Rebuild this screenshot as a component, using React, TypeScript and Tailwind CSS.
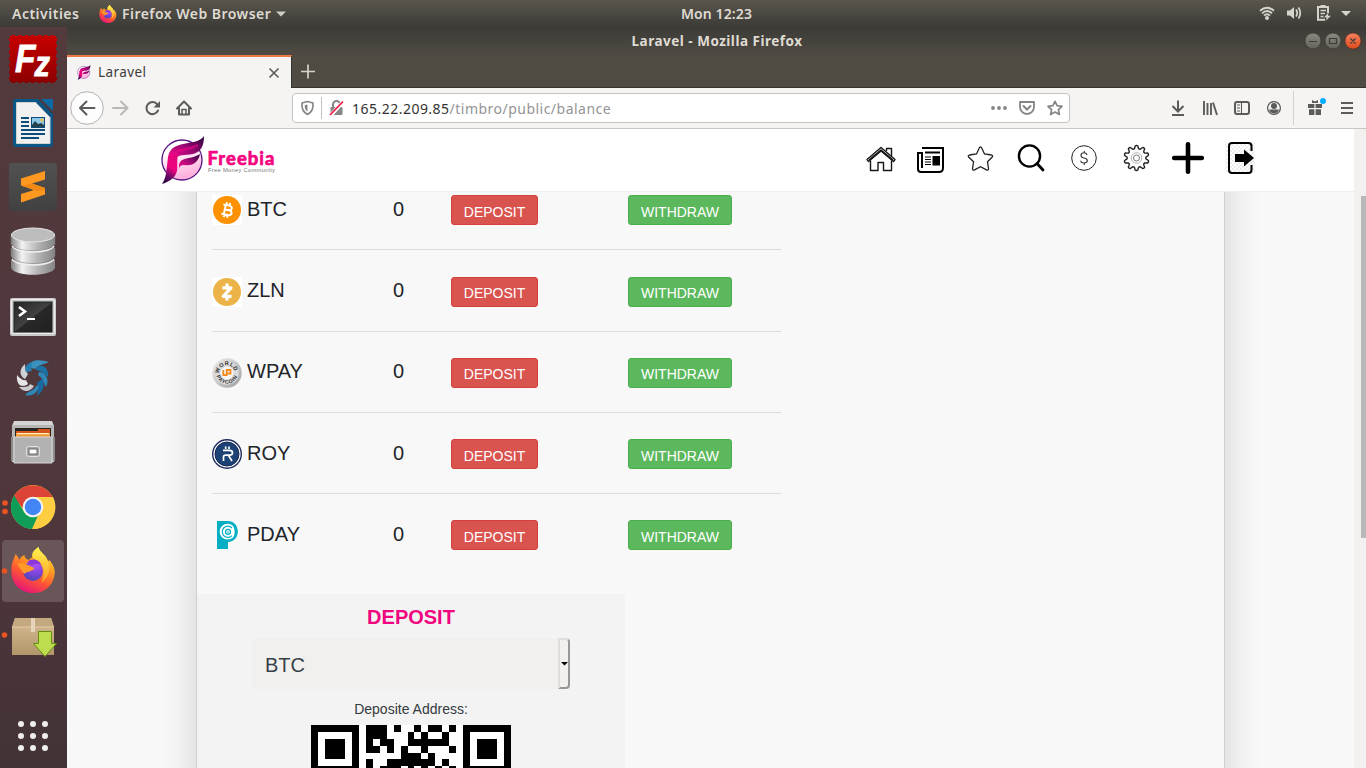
import React from "react";

type DrawProps = { x: number; y: number; w: number; h: number; className?: string; children: React.ReactNode };

/* Small drawing whose view box starts at (x, y) */
const Draw = ({ x, y, w, h, className = "", children }: DrawProps) => (
  <svg width={w} height={h} viewBox={`${x} ${y} ${w} ${h}`} fill="none" className={`block shrink-0 ${className}`}>
    {children}
  </svg>
);

const FirefoxShape = () => (
  <g>
    <defs>
      <linearGradient id="ffBody" x1="0.8" y1="0" x2="0.3" y2="1">
        <stop offset="0" stopColor="#fff44f" />
        <stop offset="0.35" stopColor="#ffa320" />
        <stop offset="0.65" stopColor="#ff5634" />
        <stop offset="1" stopColor="#e3127c" />
      </linearGradient>
      <radialGradient id="ffGlobe" cx="0.65" cy="0.2" r="0.8">
        <stop offset="0" stopColor="#b04dfb" />
        <stop offset="0.6" stopColor="#7a45d8" />
        <stop offset="1" stopColor="#4f48b8" />
      </radialGradient>
      <linearGradient id="ffFlame" x1="0" y1="0" x2="0" y2="1">
        <stop offset="0" stopColor="#fff44f" />
        <stop offset="1" stopColor="#ff9a25" />
      </linearGradient>
    </defs>
    <path d="M1 22 C1 14 4 12 5 7 C7 9 8 11 9 13 C10 10 12 9 14 8 C14 11 16 12 18 13 L22 10 C21 6 24 3 28 0 C29 5 33 6 36 11 L37 15 L39 13 C43 18 45 23 44 28 C42 40 33 46 23 46 C9 46 0 36 1 22Z" fill="url(#ffBody)" />
    <path d="M22 10 C21 5 24 3 28 0 C29 5 33 6 36 11 C42 20 38 31 31 36 C34 28 34 20 30 16 C28 13 24 13 22 10Z" fill="url(#ffFlame)" />
    <circle cx="22.500" cy="24" r="10" fill="url(#ffGlobe)" />
    <path d="M17 15 C21 11 28 12 31 18 C27 16 24 17 21 18Z" fill="#8a35d8" />
    <path d="M7 17 C12 14 17 18 24 21 C22 25 16 24 14 27 C11 24 9 21 7 17Z" fill="#ff9a2a" />
  </g>
);

const FreebiaMark = () => (
  <g>
    <defs>
      <linearGradient id="fbDisc" x1="0" y1="0" x2="0.3" y2="1">
        <stop offset="0.3" stopColor="#ffffff" />
        <stop offset="1" stopColor="#ffb0dc" />
      </linearGradient>
      <linearGradient id="fbStem" x1="0.7" y1="0" x2="0.3" y2="1">
        <stop offset="0" stopColor="#e0047c" />
        <stop offset="0.45" stopColor="#f0047f" />
        <stop offset="0.75" stopColor="#6b0c68" />
        <stop offset="1" stopColor="#2a0440" />
      </linearGradient>
      <linearGradient id="fbTop" x1="0" y1="1" x2="1" y2="0">
        <stop offset="0" stopColor="#ff0a8c" />
        <stop offset="0.5" stopColor="#a00874" />
        <stop offset="1" stopColor="#24043c" />
      </linearGradient>
    </defs>
    <circle cx="21" cy="24" r="20" fill="url(#fbDisc)" stroke="#541280" strokeWidth="1.3" />
    <path d="M7 21 C9 10 17 9 27 7 C35 6 40 4 43 0 C43 10 40 16 32 18 C24 20 17 17 13 25 C9 22 8 22 7 21Z" fill="url(#fbTop)" />
    <path d="M7 21 C11 18 14 17 18 18 C15 22 17 28 16 35 C14 43 7 46 1 48 C5 42 5 37 6 30Z" fill="url(#fbStem)" />
    <path d="M18 29 C20 20 30 24 39 18 C37 28 30 30 23 29 C20 29 19 30 18 32Z" fill="url(#fbTop)" />
    <path d="M10 20 C16 12 27 15 37 9" stroke="#f5058a" strokeWidth="3" strokeOpacity="0.55" />
  </g>
);

const perforations = Array.from({ length: 7 }, (_, i) => 13.500 + i * 6.500);

const dockIcons: React.ReactNode[] = [
  <g key="filezilla">
    <defs>
      <linearGradient id="fz" x1="0" y1="8" x2="0" y2="56" gradientUnits="userSpaceOnUse">
        <stop offset="0" stopColor="#c80000" />
        <stop offset="1" stopColor="#8c0000" />
      </linearGradient>
    </defs>
    <rect x="10" y="9" width="46" height="46" fill="url(#fz)" />
    {perforations.map((p) => (
      <g key={p} fill="url(#fz)">
        <circle cx={p} cy="10" r="2.200" />
        <circle cx={p} cy="54" r="2.200" />
        <circle cx="11" cy={p - 1} r="2.200" />
        <circle cx="55" cy={p - 1} r="2.200" />
      </g>
    ))}
    <text x="15" y="45" fontFamily="Liberation Sans" fontWeight="700" fontStyle="italic" fontSize="38" fill="#fff" stroke="#fff" strokeWidth="0.8" textLength="35" lengthAdjust="spacingAndGlyphs">
      F<tspan dy="4" dx="-1" fontSize="35">z</tspan>
    </text>
  </g>,
  <g key="writer">
    <path d="M16 8H38L53 23V53Q53 56 50 56H16Q13 56 13 53V10Q13 8 16 8Z" fill="#0b5587" />
    <path d="M16.5 11.5H36L50 26V52.5H16.5Z" fill="#f1f1f1" stroke="#d3d3d3" />
    <path d="M36 11.5L50 26V21L40 11Z" fill="#10547f" />
    <path d="M38 7H42L53 18V23Z" fill="#4e363b" />
    <path d="M41 8H53V20Z" fill="#0b69a3" />
    <path d="M21 27H29M21 31H29M21 35H29M21 39H45M21 43H45M21 47H39" stroke="#0b4c78" strokeWidth="1.9" />
    <rect x="31.5" y="26.5" width="13" height="10" fill="#8fc8e6" stroke="#0b4c78" />
    <path d="M32 36V34L35 30L38 33L41 32L44 34V36Z" fill="#23404f" />
    <circle cx="42" cy="29" r="1.8" fill="#e8c05a" />
  </g>,
  <g key="sublime">
    <defs>
      <linearGradient id="sub" x1="0" y1="0" x2="0" y2="1">
        <stop offset="0" stopColor="#515151" />
        <stop offset="1" stopColor="#414141" />
      </linearGradient>
    </defs>
    <rect x="9" y="8" width="48" height="48" rx="3" fill="url(#sub)" />
    <path d="M21 23.5L45 16V24.5L32 28.5L45 33V39.5L21 47.5V39L34 35L21 30.5Z" fill="#ff9820" />
    <path d="M21 30.5L32 28.5L45 33V35L37 36Z" fill="#f08a14" />
  </g>,
  <g key="database">
    <defs>
      <linearGradient id="db" x1="0" x2="1">
        <stop offset="0" stopColor="#7f7f7f" />
        <stop offset="0.25" stopColor="#f3f3f3" />
        <stop offset="0.6" stopColor="#b5b5b5" />
        <stop offset="1" stopColor="#858585" />
      </linearGradient>
    </defs>
    <path d="M11 41V49C14 58 52 58 55 49V41Z" fill="url(#db)" />
    <path d="M11 29V37C14 47 52 47 55 37V29Z" fill="url(#db)" stroke="#777" strokeWidth="0.5" />
    <path d="M11 16V25C14 34 52 34 55 25V16Z" fill="url(#db)" stroke="#777" strokeWidth="0.5" />
    <path d="M12 27C16 35 50 35 54 27M12 40C16 48 50 48 54 40" stroke="#f0f0f0" strokeWidth="1.4" />
    <ellipse cx="33" cy="16" rx="21.5" ry="7" fill="#bdbdbd" stroke="#e5e5e5" />
  </g>,
  <g key="terminal">
    <defs>
      <linearGradient id="term" x1="0" y1="0" x2="1" y2="1">
        <stop offset="0" stopColor="#242424" />
        <stop offset="0.5" stopColor="#424242" />
        <stop offset="0.51" stopColor="#282828" />
        <stop offset="1" stopColor="#202020" />
      </linearGradient>
    </defs>
    <rect x="10" y="15" width="46" height="38" rx="2" fill="#c9c9c9" />
    <rect x="11.5" y="16.5" width="43" height="34" rx="1" stroke="#ededed" />
    <rect x="14" y="19" width="38" height="30" fill="url(#term)" stroke="#202020" />
    <path d="M19 24L25 28.5L19 33" stroke="#fff" strokeWidth="2.6" />
    <path d="M27 36H35" stroke="#fff" strokeWidth="2" />
  </g>,
  <g key="shutter">
    <path d="M27 20C31 12 40 12 49 15C45 17 38 18 35 22Z" fill="#3b91bd" />
    <path d="M36 21C42 16 49 20 48 30C45 27 42 24 36 23Z" fill="#1a72a5" />
    <path d="M39 25C46 25 50 33 46 40C43 35 43 31 38 28Z" fill="#2e87b5" />
    <path d="M42 32C46 37 43 45 37 49C38 42 39 39 37 36Z" fill="#1769a0" />
    <path d="M39 38C38 46 32 50 25 48C30 43 35 43 36 39Z" fill="#2e87b5" />
    <path d="M34 39C30 45 24 46 19 40C25 40 29 40 30 37Z" fill="#c9c9ce" />
    <path d="M28 37C21 42 16 37 17 28C20 32 24 34 26 33Z" fill="#e5e5e8" />
    <path d="M25 32C19 29 19 22 25 17C25 23 27 26 28 27Z" fill="#cfd0d6" />
    <path d="M26 25C24 21 26 17 32 15C31 21 31 22 32 24Z" fill="#267faf" />
  </g>,
  <g key="files">
    <path d="M14 10H52L54 15V51H12V15Z" fill="#d4d4d4" />
    <path d="M12 14H54L53 50H13Z" fill="#b5b5b5" />
    <rect x="15" y="17" width="36" height="10" fill="#282420" />
    <path d="M16 20H38V18H50V27H16Z" fill="#d3551c" />
    <path d="M16 22H50V27H16Z" fill="#f29a37" />
    <path d="M17 22.6H49" stroke="#fff0c4" strokeWidth="1.2" />
    <path d="M14 26H52V52H14Z" fill="#b2b2b2" stroke="#d6d6d6" />
    <path d="M12 26V50M54 26V50" stroke="#8a8a8a" strokeWidth="2" />
    <rect x="26.5" y="35.5" width="13" height="10" rx="2" fill="#a4a4a4" stroke="#e0e0e0" />
    <rect x="29" y="38" width="8" height="5" fill="#fff" stroke="#686868" />
  </g>,
  <g key="chrome" transform="translate(0 1)">
    <circle cx="5" cy="27" r="2.8" fill="#e95420" />
    <circle cx="5" cy="35.5" r="2.8" fill="#e95420" />
    <circle cx="33" cy="31" r="22" fill="#ffcd42" />
    <path d="M13.5 21A22 22 0 0 1 52.5 21H33A10 10 0 0 0 23.5 33Z" fill="#db4437" />
    <path d="M14.2 19.5L24.5 36.5A10 10 0 0 0 38 39.5L32 53A22 22 0 0 1 14.2 19.5Z" fill="#0f9d58" />
    <path d="M33 21H53A22 22 0 0 1 32.5 53L42 36A10 10 0 0 0 33 21Z" fill="#ffcd42" />
    <circle cx="33" cy="31" r="10.3" fill="#f4f4f4" />
    <circle cx="33" cy="31" r="8.2" fill="#4285f4" />
  </g>,
  <g key="firefox">
    <rect x="2" y="1" width="62" height="62" rx="4" fill="#685659" />
    <circle cx="4.5" cy="32" r="2.8" fill="#e95420" />
    <g transform="translate(10.5 8)">
      <FirefoxShape />
    </g>
  </g>,
  <g key="package">
    <defs>
      <linearGradient id="box" x1="0" y1="0" x2="0" y2="1">
        <stop offset="0" stopColor="#d8bd93" />
        <stop offset="1" stopColor="#b1966a" />
      </linearGradient>
    </defs>
    <circle cx="4.5" cy="32" r="2.8" fill="#e95420" />
    <path d="M15 15H51L54 24V52H12V24Z" fill="url(#box)" />
    <path d="M15 15H51L54 24H12Z" fill="#c3a880" />
    <path d="M12 24H54" stroke="#e3cda8" />
    <path d="M31 15H35V29H31Z" fill="#e6d5bb" />
    <path d="M38.5 28.5H51.5V40.5H56.5L45 53.5L33.5 40.5H38.5Z" fill="#bedd4e" stroke="#62920f" />
  </g>,
];

const coins = [
  { name: "BTC", row: "h-[58px] pt-[3px] border-b", text: "leading-[28px]", button: "leading-[27px]", icon: (
    <>
      <rect width="30" height="30" fill="#fff" />
      <circle cx="15" cy="15" r="14" fill="#fd9100" />
      <g transform="rotate(12 15 15)">
        <path d="M10.3 10.3H16C20.5 10.3 20.3 14.6 16.3 14.8C21.6 14.8 21.2 19.8 16.6 19.8H10.3M12.7 10V20M13 14.9H16.4M13.4 7.4V10M16.6 7.4V10M13.4 20V22.6M16.6 20V22.6" stroke="#fff" strokeWidth="2" />
      </g>
    </>
  ) },
  { name: "ZLN", row: "h-[82px] pt-[27px] border-b", text: "leading-[26px]", button: "leading-[25px]", icon: (
    <>
      <rect width="30" height="30" fill="#fff" />
      <circle cx="15" cy="15" r="14" fill="#ebb348" />
      <path d="M10.4 10.8H19L11.2 19.3H19.5M15 6.6V10M15 20V23.6" stroke="#fff" strokeWidth="3.2" strokeLinejoin="round" />
    </>
  ) },
  { name: "WPAY", row: "h-[81px] pt-[26px] border-b", text: "leading-[26px]", button: "leading-[25px]", icon: (
    <>
      <defs>
        <linearGradient id="wp" x1="0" y1="0" x2="1" y2="1">
          <stop offset="0" stopColor="#f0f0f0" />
          <stop offset="0.5" stopColor="#c8c8c8" />
          <stop offset="1" stopColor="#9c9c9c" />
        </linearGradient>
        <path id="wpTop" d="M7 15.5A8 8.3 0 0 1 23 15.5" />
        <path id="wpBottom" d="M4.2 15A10.8 10.8 0 0 0 25.8 15" />
      </defs>
      <circle cx="15" cy="15" r="14.7" fill="url(#wp)" />
      <circle cx="15" cy="15" r="11.8" fill="#d9d9d9" />
      <circle cx="15" cy="15" r="6.4" fill="#f6f6f6" />
      <text fontFamily="Liberation Sans" fontWeight="700" fontSize="5.600" fill="#333"><textPath href="#wpTop" textLength="23">WORLD</textPath></text>
      <text fontFamily="Liberation Sans" fontWeight="700" fontSize="5.200" fill="#333"><textPath href="#wpBottom" startOffset="3" textLength="27">PAYCOIN</textPath></text>
      <path d="M11.3 12V17H14.7V12M14.7 18V12H18.5V15.5H15" stroke="#f58a1f" strokeWidth="1.8" />
    </>
  ) },
  { name: "ROY", row: "h-[81px] pt-[26px] border-b", text: "leading-[28px]", button: "leading-[27px]", icon: (
    <>
      <circle cx="15" cy="15" r="14.3" fill="#fff" stroke="#1e2a5e" strokeWidth="1.4" />
      <circle cx="15" cy="15" r="12" fill="#1d4275" stroke="#162554" />
      <path d="M11 11.3H17.5C21.5 11.3 21.5 16.2 17.5 16.2H13.6C12 16.2 11.5 17 11.5 18V22M16.5 16.5L20 22M13.7 7.5V10M17 7.5V10" stroke="#fff" strokeWidth="1.7" />
    </>
  ) },
  { name: "PDAY", row: "h-[100px] pt-[26px]", text: "leading-[28px]", button: "leading-[27px]", icon: (
    <>
      <path d="M5 1H16C29 1 29 22 16 22V29H5Z" fill="#05aec3" />
      <circle cx="15.6" cy="11.7" r="7.9" fill="#fff" />
      <path d="M20 8A5.6 5.6 0 1 0 20 15.6" stroke="#05aec3" strokeWidth="1.2" />
      <circle cx="16" cy="11.8" r="2.5" stroke="#05aec3" strokeWidth="1.3" />
      <path d="M20 4C23.500 8 23.500 16 20 20C27 17 27.500 7 20 4Z" fill="#05aec3" />
      <path d="M16 11V13.5" stroke="#05aec3" />
    </>
  ) },
];

const qrRows = [
  "11111110111010010110101111111",
  "10000010111000101001001000001",
  "10111010101100111111001011101",
  "10111010110101001000101011101",
  "10111010000001110100001011101",
  "10000010100111111101001000001",
  "11111110101110101010101111111",
];

const gearPath = (() => {
  const pts: string[] = [];
  for (let i = 0; i < 90; i++) {
    const a = (i / 90) * Math.PI * 2;
    const r = 10.9 + 1.6 * Math.tanh(2.2 * Math.cos(10 * (a + Math.PI / 2)));
    pts.push(`${(1136.5 + r * Math.cos(a)).toFixed(2)} ${(158 + r * Math.sin(a)).toFixed(2)}`);
  }
  return `M${pts.join("L")}Z`;
})();

const TopBar = () => (
  <div className="flex h-[27px] shrink-0 items-center bg-linear-to-b from-[#5a564d] to-[#3c3b37] font-['Noto_Sans'] text-[14px] font-semibold leading-[25px] text-[#dfdbd2]">
    <div className="flex w-[681px] items-center pl-3">
      <span className="-mt-px w-[87px] shrink-0 tracking-[0.5px]">Activities</span>
      <svg width="18" height="18" viewBox="0 0 46 46" className="mr-[5px] shrink-0"><FirefoxShape /></svg>
      <span className="-mt-px tracking-[0.47px] whitespace-nowrap">Firefox Web Browser</span>
      <Draw x={275} y={10} w={12} h={8} className="ml-[4px]"><path d="M276 11.5H286L281 16.5Z" fill="#cfccc4" /></Draw>
    </div>
    <span className="-mt-px tracking-[0.1px] whitespace-nowrap">Mon 12:23</span>
    <div className="flex flex-1 items-center justify-end">
      <Draw x={1256} y={0} w={110} h={27}>
        <g stroke="#d6d3cb" strokeWidth="1.8">
          <path d="M1260 10.8Q1267 4.8 1274 10.8" />
          <path d="M1262 13.3Q1267 8.8 1272 13.3" />
          <path d="M1264 15.6Q1267 12.8 1270 15.6" />
          <path d="M1296 9.5Q1298.5 13 1296 16.5M1298.5 7.5Q1302 13 1298.5 18.5" strokeWidth="1.8" />
          <path d="M1325 19.8H1318V7H1328V13" strokeWidth="2" />
          <path d="M1320.5 10.500H1326M1320.5 13.500H1325M1320.5 16.500H1323.5" strokeWidth="1.3" />
        </g>
        <circle cx="1267" cy="18" r="2" fill="#d6d3cb" />
        <path d="M1287 10.5H1290L1294 7V19L1290 15.5H1287Z" fill="#d6d3cb" />
        <path d="M1320.5 5H1325.5V7.5H1320.5ZM1328.5 12.5L1324 17.5H1327L1325.5 21L1331 15.8H1328Z" fill="#d6d3cb" />
        <path d="M1341 11H1351L1346 16Z" fill="#d6d3cb" />
      </Draw>
    </div>
  </div>
);

const Dock = () => (
  <div className="flex w-[67px] shrink-0 flex-col bg-linear-to-b from-[#533a3d] via-[#4e363b] via-70% to-[#423236]">
    {dockIcons.map((icon, i) => (
      <svg key={i} width="67" height="64" viewBox="0 0 67 64" fill="none" className="block shrink-0">{icon}</svg>
    ))}
    <svg width="67" height="64" viewBox="0 0 67 64" className="mt-auto block shrink-0">
      {[20, 32, 44].map((cy) => [21, 33, 45].map((cx) => <circle key={`${cx}-${cy}`} cx={cx} cy={cy} r="3" fill="#f0efee" />))}
    </svg>
  </div>
);

const Chrome = () => (
  <>
    <div className="flex h-[28px] shrink-0 items-center bg-linear-to-b from-[#3c3b37] to-[#4f4b43]">
      <div className="flex-1" />
      <span className="pl-[1px] font-['Noto_Sans'] text-[13.5px] font-bold leading-7 tracking-[0.5px] whitespace-nowrap text-[#dfdbd2]">Laravel - Mozilla Firefox</span>
      <div className="flex flex-1 justify-end">
        <Draw x={1302} y={27} w={64} h={28}>
          <defs>
            <linearGradient id="wb" x1="0" y1="0" x2="0" y2="1"><stop offset="0" stopColor="#8b887f" /><stop offset="1" stopColor="#65625a" /></linearGradient>
            <linearGradient id="wc" x1="0" y1="0" x2="0" y2="1"><stop offset="0" stopColor="#f4825f" /><stop offset="1" stopColor="#df4b1c" /></linearGradient>
          </defs>
          <circle cx="1313" cy="41" r="8" fill="url(#wb)" stroke="#383631" strokeWidth="0.7" />
          <circle cx="1333" cy="41" r="8" fill="url(#wb)" stroke="#383631" strokeWidth="0.7" />
          <circle cx="1353" cy="41" r="8" fill="url(#wc)" stroke="#5a2d1e" strokeWidth="0.7" />
          <path d="M1309 41.5H1317M1329.5 38.5H1336.5V43.5H1329.5ZM1350.5 38.5L1355.5 43.5M1355.5 38.5L1350.5 43.5" stroke="#3c3b37" strokeWidth="1.2" />
        </Draw>
      </div>
    </div>
    <div className="flex h-[33px] shrink-0 border-b border-[#33322e] bg-[#4f4b43]">
      <div className="-mb-px flex w-[225px] items-center border-t-2 border-r border-t-[#f07746] border-r-[#33322e] bg-[#f5f4f2] pl-[10px]">
        <svg width="14" height="15" viewBox="0 0 44 49" fill="none" className="mr-[7px] shrink-0"><FreebiaMark /></svg>
        <span className="-mt-[2px] flex-1 font-['Noto_Sans'] text-[13.5px] leading-5 tracking-[0.4px] text-[#3d3d3d]">Laravel</span>
        <Draw x={267} y={65} w={14} h={14} className="mr-[10px]"><path d="M269.5 67.5L278.5 76.5M278.5 67.5L269.5 76.5" stroke="#5b5b5a" strokeWidth="1.6" /></Draw>
      </div>
      <Draw x={292} y={55} w={32} h={32}><path d="M301 71.5H315M308 64.5V78.5" stroke="#d5d2ca" strokeWidth="1.7" /></Draw>
    </div>
    <div className="flex h-[41px] shrink-0 items-center border-b border-[#c8c5c2] bg-[#f5f4f2]">
      <Draw x={67} y={88} w={225} h={40}>
        <circle cx="87" cy="108" r="16.3" fill="#fdfdfd" stroke="#b4b2b0" />
        <path d="M94.5 108H80.5M86.5 101.5L80 108L86.5 114.5" stroke="#5b5b5a" strokeWidth="2" strokeLinecap="round" strokeLinejoin="round" />
        <path d="M113 108H127M121 101.5L127.5 108L121 114.5" stroke="#b9b8b7" strokeWidth="2" strokeLinecap="round" strokeLinejoin="round" />
        <path d="M157.3 104.5A6 6 0 1 0 158 110.5" stroke="#5b5b5a" strokeWidth="2" strokeLinecap="round" />
        <path d="M160 101V107.5H153.5Z" fill="#5b5b5a" />
        <path d="M177 108.5L184 101.5L191 108.5M179 107.5V114.5H189V107.5" stroke="#5b5b5a" strokeWidth="2" strokeLinecap="round" strokeLinejoin="round" />
        <path d="M182 114V109.5H186V114" stroke="#5b5b5a" strokeWidth="1.5" />
      </Draw>
      <div className="flex h-[30px] w-[778px] shrink-0 items-center rounded-[4px] border border-[#c5c3c1] bg-white">
        <Draw x={293} y={94} w={59} h={28}>
          <path d="M302 103L307.5 101.5L313 103C313.5 109.5 311.5 112 307.5 114.5C303.5 112 301.5 109.5 302 103Z" stroke="#858585" strokeWidth="1.7" strokeLinejoin="round" />
          <path d="M307.5 104.5V111.5C305 110 304.7 108 304.7 105.2Z" fill="#858585" />
          <path d="M321.5 97V119" stroke="#c5c3c1" />
          <path d="M333 107V104.5A3.5 3.5 0 0 1 340 104.5V107" stroke="#858585" strokeWidth="2" />
          <rect x="330.5" y="107" width="12" height="8" rx="1" fill="#858585" />
          <path d="M330.5 115.5L343.5 101.5" stroke="#fff" strokeWidth="4" />
          <path d="M330 115L343 101.5" stroke="#f5194a" strokeWidth="1.8" />
        </Draw>
        <span className="mt-[2px] flex-1 font-['Noto_Sans'] text-[14px] leading-5 tracking-[0.48px] whitespace-nowrap text-[#333]">165.22.209.85<span className="text-[#949494]">/timbro/public/balance</span></span>
        <Draw x={985} y={94} w={84} h={28}>
          <g fill="#858585"><circle cx="993" cy="108" r="1.9" /><circle cx="999" cy="108" r="1.9" /><circle cx="1005" cy="108" r="1.9" /></g>
          <path d="M1020 102H1034V107A7 7 0 0 1 1020 107Z" stroke="#858585" strokeWidth="1.8" strokeLinejoin="round" />
          <path d="M1023.5 106L1027 109.5L1030.5 106" stroke="#858585" strokeWidth="2" strokeLinecap="round" />
          <path d="M1055 101.3L1057.1 105.7L1062 106.3L1058.4 109.6L1059.4 114.5L1055 112.1L1050.6 114.5L1051.6 109.6L1048 106.3L1052.9 105.7Z" stroke="#858585" strokeWidth="1.7" strokeLinejoin="round" />
        </Draw>
      </div>
      <Draw x={1165} y={88} w={201} h={40} className="ml-auto">
        <g stroke="#5b5b5a" strokeWidth="2">
          <path d="M1178 100.5V111M1172.5 106L1178 111.5L1183.5 106M1172 115H1184" />
          <path d="M1204 101V115M1207.5 103V115M1211 103V115M1213 102.5L1217 115" strokeWidth="1.9" />
          <rect x="1235" y="102" width="14" height="12" rx="2" />
          <path d="M1241.5 102V114M1237 105H1240M1237 108H1240M1237 111H1240" strokeWidth="1.1" />
          <circle cx="1274" cy="108" r="6.4" strokeWidth="1.3" />
        </g>
        <circle cx="1274" cy="106" r="3" fill="#5b5b5a" />
        <path d="M1269 109.5H1279Q1277.5 113.5 1274 113.5Q1270.5 113.5 1269 109.5Z" fill="#5b5b5a" />
        <path d="M1293.5 91V125" stroke="#d3d1cf" />
        <path d="M1308 104H1314.4V108H1308ZM1315.6 104H1322V108H1315.6ZM1309 109.2H1314.4V115H1309ZM1315.6 109.2H1321V115H1315.6ZM1312 100L1315 101.5L1318 100V103H1312Z" fill="#5b5b5a" />
        <circle cx="1323" cy="101" r="3" fill="#00aeff" />
        <path d="M1341 103H1353M1341 108H1353M1341 113H1353" stroke="#5b5b5a" strokeWidth="2" />
      </Draw>
    </div>
  </>
);

const Header = () => (
  <div className="flex h-[63px] shrink-0 border-b border-[#efefef] bg-white pr-[98px] pl-[94px]">
    <Draw x={161} y={129} w={120} h={62}>
      <g transform="translate(161 136)"><FreebiaMark /></g>
      <text x="207.5" y="164.5" fontFamily="Lato, sans-serif" fontWeight="700" fontSize="18.5" fill="#f5057f" stroke="#f5057f" strokeWidth="0.7" strokeLinejoin="round" textLength="67" lengthAdjust="spacing">Freebia</text>
      <text x="208" y="171.5" fontFamily="Liberation Sans" fontSize="5.8" fill="#777" textLength="67">Free Money Community</text>
    </Draw>
    <div className="ml-auto flex">
      <Draw x={864} y={129} w={52} h={62}>
        <g stroke="#161616" strokeWidth="1.4" strokeLinejoin="round">
          <path d="M867 159.5L881 147.5L895 159.5L893.5 161.5L881 151L868.5 161.5Z" />
          <path d="M870.5 160.5V170.5H878V162.5H883.5V170.5H891.5V160.5M886.5 151V148.5H891.5V156" />
          <path d="M869 160L881 150L893 160" strokeWidth="1.5" />
        </g>
      </Draw>
      <Draw x={916} y={129} w={50} h={62}>
        <path d="M922 148H943V168Q943 172 939 172H921Q918 172 918 169V153H922V168" stroke="#000" strokeWidth="2" />
        <path d="M925 152.5H940" stroke="#000" strokeWidth="2" />
        <path d="M925 157H931M925 159.5H931M925 162H931M925 164.5H931" stroke="#000" strokeWidth="1.2" />
        <rect x="932.5" y="156" width="7.5" height="9.5" fill="#000" />
      </Draw>
      <Draw x={966} y={129} w={50} h={62}>
        <path d="M980.5 146.8Q981.5 147 982 148.5L984.5 154L991.5 155Q993.5 155.7 992 157.2L987.5 161.8L988.5 168.5Q988.5 170.8 986.5 169.8L980.5 166.7L974.5 169.8Q972.5 170.8 972.5 168.5L973.6 161.8L968.8 157.2Q967.5 155.7 969.5 155L976.5 154L979 148.5Q979.6 146.8 980.5 146.8Z" stroke="#222" strokeWidth="1.3" />
      </Draw>
      <Draw x={1016} y={129} w={50} h={62}>
        <circle cx="1029.5" cy="156" r="10.6" stroke="#000" strokeWidth="2.4" />
        <path d="M1037 163.5L1043 170" stroke="#000" strokeWidth="2.8" strokeLinecap="round" />
      </Draw>
      <Draw x={1066} y={129} w={54} h={62}>
        <circle cx="1084" cy="158" r="12.3" stroke="#222" strokeWidth="1" />
        <path d="M1087 155Q1086.5 152.8 1084 152.8Q1081 152.8 1081 155.3Q1081 157.5 1084 158Q1087.3 158.5 1087.3 160.8Q1087.3 163 1084 163Q1081 163 1080.7 160.8M1084.300 151V153M1084.300 163V165" stroke="#333" strokeWidth="1.1" />
      </Draw>
      <Draw x={1120} y={129} w={50} h={62}>
        <path d={gearPath} stroke="#222" strokeWidth="1.4" strokeLinejoin="round" />
        <circle cx="1136.5" cy="158" r="5.3" stroke="#aaa" strokeWidth="0.9" />
        <circle cx="1136.5" cy="158" r="3" stroke="#777" />
      </Draw>
      <Draw x={1170} y={129} w={54} h={62}>
        <path d="M1174.2 158H1201.8M1188 144.2V171.8" stroke="#000" strokeWidth="4.6" strokeLinecap="round" />
      </Draw>
      <Draw x={1224} y={129} w={32} h={62}>
        <defs>
          <pattern id="chk" width="4" height="4" patternUnits="userSpaceOnUse"><path d="M0 0H2V2H0ZM2 2H4V4H2Z" fill="#efefef" /></pattern>
        </defs>
        <rect x="1225" y="143" width="30" height="30" fill="url(#chk)" />
        <path d="M1251.5 151V146Q1251.5 143 1248.500 143H1232Q1229 143 1229 146V170Q1229 173 1232 173H1248.500Q1251.5 173 1251.5 170V165" stroke="#000" strokeWidth="2" />
        <path d="M1235 154H1244V149.5L1254 158L1244 166.5V162H1235Z" fill="#000" />
      </Draw>
    </div>
  </div>
);

const buttonBase = "h-[30px] rounded-[3px] border pt-[3px] text-[14px] text-white text-center";

const Content = () => (
  <div className="flex min-h-0 flex-1 bg-[#f8f8f8]">
    <div className="w-[94px] shrink-0" />
    <div className="w-[35px] shrink-0 bg-linear-to-r from-[#f8f8f8] via-[#f1f1f1] to-[#e4e4e4]" />
    <main className="flex w-[1029px] shrink-0 flex-col overflow-hidden border-x border-[#cfcfcf]">
      <div className="ml-[15px] w-[569px] shrink-0">
        {coins.map((c) => (
          <div key={c.name} className={`flex border-[#dcdcdc] ${c.row}`}>
            <svg width="30" height="30" viewBox="0 0 30 30" fill="none" className="block shrink-0">{c.icon}</svg>
            <span className={`ml-[5px] w-[146px] text-[20px] text-[#212529] ${c.text}`}>{c.name}</span>
            <span className={`w-[58px] text-[20px] text-[#212529] ${c.text}`}>0</span>
            <button className={`${buttonBase} w-[87px] border-[#d43f3a] bg-[#d9534f] ${c.button}`}>DEPOSIT</button>
            <button className={`${buttonBase} ml-[90px] w-[104px] border-[#4cae4c] bg-[#5cb85c] ${c.button}`}>WITHDRAW</button>
          </div>
        ))}
      </div>
      <section className="flex w-[428px] flex-1 flex-col items-center bg-[#f3f3f3]">
        <h2 className="mt-[11px] text-[20px] leading-6 font-bold text-[#f0047f]">DEPOSIT</h2>
        <div className="mt-[9px] flex h-[51px] w-[318px] shrink-0 justify-between rounded-[4px] bg-[#f1f0ee] pl-[13px]">
          <span className="text-[20px] leading-[55px] text-[#373f47]">BTC</span>
          <span className="flex w-[12px] items-center justify-center rounded-r-[4px] border-2 border-t-[#dedede] border-r-[#979797] border-b-[#979797] border-l-[#dedede]">
            <svg width="7" height="4" viewBox="0 0 7 4" className="shrink-0"><path d="M0 0H7L3.5 3.5Z" fill="#000" /></svg>
          </span>
        </div>
        <p className="mt-[9px] text-[14px] leading-[22px] text-[#343a40]">Deposite Address:</p>
        <svg width="200" height="48.3" viewBox="0 0 29 7" shapeRendering="crispEdges" className="mt-[5px] shrink-0">
          <rect width="29" height="7" fill="#fff" />
          {qrRows.map((r, y) => r.split("").map((v, x) => (v === "1" ? <rect key={`${x}-${y}`} x={x} y={y} width="1" height="1" fill="#000" /> : null)))}
        </svg>
      </section>
    </main>
    <div className="w-[35px] shrink-0 bg-linear-to-l from-[#f8f8f8] via-[#f1f1f1] to-[#e4e4e4]" />
  </div>
);

export default function App() {
  return (
    <div className="flex h-[768px] w-[1366px] flex-col overflow-hidden font-['Liberation_Sans',sans-serif]">
      <TopBar />
      <div className="flex min-h-0 flex-1">
        <Dock />
        <div className="flex min-w-0 flex-1 flex-col">
          <Chrome />
          <div className="flex min-h-0 flex-1">
            <div className="flex w-[1287px] shrink-0 flex-col overflow-hidden">
              <Header />
              <Content />
            </div>
            <div className="flex flex-1 flex-col items-end bg-[#f2f1f0] pt-[67px]">
              <div className="h-[342px] w-[5px] bg-[#b8b8b7]" />
            </div>
          </div>
        </div>
      </div>
    </div>
  );
}
